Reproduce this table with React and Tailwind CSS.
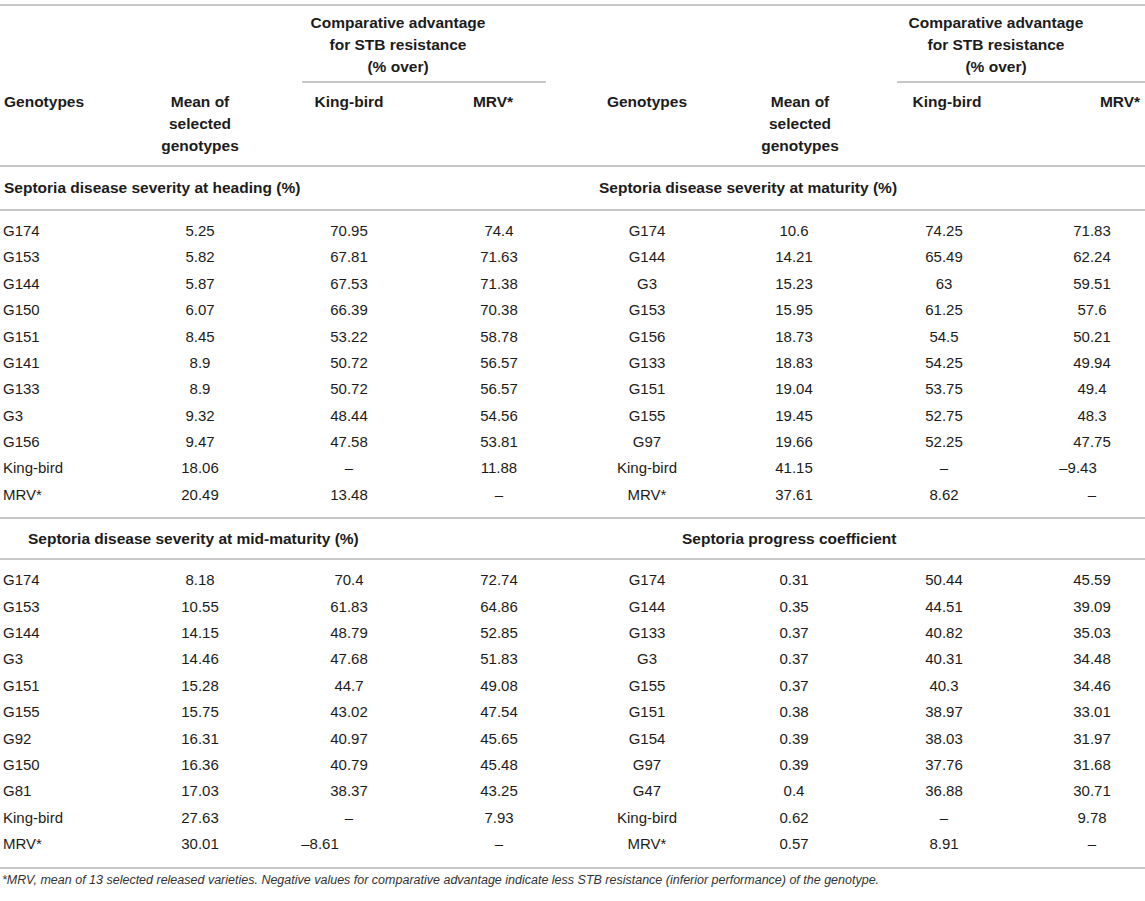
import React from 'react'

const GRID = 'grid grid-cols-[130px_140px_158px_142px_154px_140px_160px_121px]'

// [genotype, mean, king-bird, mrv] left block | right block
const TOP = [
  [['G174', '5.25', '70.95', '74.4'], ['G174', '10.6', '74.25', '71.83']],
  [['G153', '5.82', '67.81', '71.63'], ['G144', '14.21', '65.49', '62.24']],
  [['G144', '5.87', '67.53', '71.38'], ['G3', '15.23', '63', '59.51']],
  [['G150', '6.07', '66.39', '70.38'], ['G153', '15.95', '61.25', '57.6']],
  [['G151', '8.45', '53.22', '58.78'], ['G156', '18.73', '54.5', '50.21']],
  [['G141', '8.9', '50.72', '56.57'], ['G133', '18.83', '54.25', '49.94']],
  [['G133', '8.9', '50.72', '56.57'], ['G151', '19.04', '53.75', '49.4']],
  [['G3', '9.32', '48.44', '54.56'], ['G155', '19.45', '52.75', '48.3']],
  [['G156', '9.47', '47.58', '53.81'], ['G97', '19.66', '52.25', '47.75']],
  [['King-bird', '18.06', '–', '11.88'], ['King-bird', '41.15', '–', '–9.43']],
  [['MRV*', '20.49', '13.48', '–'], ['MRV*', '37.61', '8.62', '–']],
]

const BOTTOM = [
  [['G174', '8.18', '70.4', '72.74'], ['G174', '0.31', '50.44', '45.59']],
  [['G153', '10.55', '61.83', '64.86'], ['G144', '0.35', '44.51', '39.09']],
  [['G144', '14.15', '48.79', '52.85'], ['G133', '0.37', '40.82', '35.03']],
  [['G3', '14.46', '47.68', '51.83'], ['G3', '0.37', '40.31', '34.48']],
  [['G151', '15.28', '44.7', '49.08'], ['G155', '0.37', '40.3', '34.46']],
  [['G155', '15.75', '43.02', '47.54'], ['G151', '0.38', '38.97', '33.01']],
  [['G92', '16.31', '40.97', '45.65'], ['G154', '0.39', '38.03', '31.97']],
  [['G150', '16.36', '40.79', '45.48'], ['G97', '0.39', '37.76', '31.68']],
  [['G81', '17.03', '38.37', '43.25'], ['G47', '0.4', '36.88', '30.71']],
  [['King-bird', '27.63', '–', '7.93'], ['King-bird', '0.62', '–', '9.78']],
  [['MRV*', '30.01', '–8.61', '–'], ['MRV*', '0.57', '8.91', '–']],
]

const isNeg = v => v.length > 1 && v.startsWith('–')

function DataRow({ left, right }) {
  return (
    <div className={`${GRID} h-[26.4px] items-center`}>
      <div className="pl-[3px]">{left[0]}</div>
      <div className="text-center">{left[1]}</div>
      <div className={isNeg(left[2]) ? 'pr-[58px] text-center' : 'text-center'}>
        {left[2]}
      </div>
      <div className="text-center">{left[3]}</div>
      <div className="text-center">{right[0]}</div>
      <div className="text-center">{right[1]}</div>
      <div className="text-center">{right[2]}</div>
      <div className={isNeg(right[3]) ? 'pr-[13px] text-center' : 'pl-[15px] text-center'}>
        {right[3]}
      </div>
    </div>
  )
}

function Comparative() {
  return (
    <>
      <div>Comparative advantage</div>
      <div>for STB resistance</div>
      <div>(% over)</div>
    </>
  )
}

export default function App() {
  return (
    <div className="w-[1145px] bg-white pt-[4px] font-['Liberation_Sans',Arial,sans-serif] text-[15px] text-[#1c1c1c]">
      {/* Encabezado */}
      <div className={`${GRID} border-y-2 border-[#c8c8c8] text-[15.5px] font-bold leading-[22px]`}>
        <div className="col-span-2" />
        <div className="col-span-2 pt-[6px]">
          <div className="pr-[44px] text-center">
            <Comparative />
          </div>
          <div className="mt-[3px] ml-[32px] mr-[24px] border-t-2 border-[#c8c8c8]" />
        </div>
        <div className="col-span-2" />
        <div className="col-span-2 pt-[6px]">
          <div className="pr-[17px] text-center">
            <Comparative />
          </div>
          <div className="mt-[3px] ml-[33px] border-t-2 border-[#c8c8c8]" />
        </div>

        <div className="pt-[8px] pb-[8px] pl-[4px]">Genotypes</div>
        <div className="pt-[8px] pb-[8px] text-center">
          Mean of
          <br />
          selected
          <br />
          genotypes
        </div>
        <div className="pt-[8px] text-center">King-bird</div>
        <div className="pt-[8px] pr-[12px] text-center">MRV*</div>
        <div className="pt-[8px] text-center">Genotypes</div>
        <div className="pt-[8px] pl-[12px] text-center">
          Mean of
          <br />
          selected
          <br />
          genotypes
        </div>
        <div className="pt-[8px] pl-[6px] text-center">King-bird</div>
        <div className="pt-[8px] pl-[71px] text-center">MRV*</div>
      </div>

      {/* Primer bloque */}
      <div className="flex h-[44px] items-center border-b-2 border-[#c8c8c8] text-[15.5px] font-bold">
        <div className="w-[570px] pl-[4px]">Septoria disease severity at heading (%)</div>
        <div className="pl-[29px]">Septoria disease severity at maturity (%)</div>
      </div>
      <div className="border-b-2 border-[#c8c8c8] pt-[7px] pb-[9px]">
        {TOP.map((r, i) => (
          <DataRow key={i} left={r[0]} right={r[1]} />
        ))}
      </div>

      {/* Segundo bloque */}
      <div className="flex h-[41px] items-center border-b-2 border-[#c8c8c8] text-[15.5px] font-bold">
        <div className="w-[570px] pl-[28px]">Septoria disease severity at mid-maturity (%)</div>
        <div className="pl-[112px]">Septoria progress coefficient</div>
      </div>
      <div className="border-b-2 border-[#c8c8c8] pt-[7px] pb-[9px]">
        {BOTTOM.map((r, i) => (
          <DataRow key={i} left={r[0]} right={r[1]} />
        ))}
      </div>

      {/* Nota */}
      <p className="pt-[3px] pl-[2px] text-[12.5px] italic leading-[16px] text-[#333]">
        *MRV, mean of 13 selected released varieties. Negative values for comparative advantage
        indicate less STB resistance (inferior performance) of the genotype.
      </p>
    </div>
  )
}
